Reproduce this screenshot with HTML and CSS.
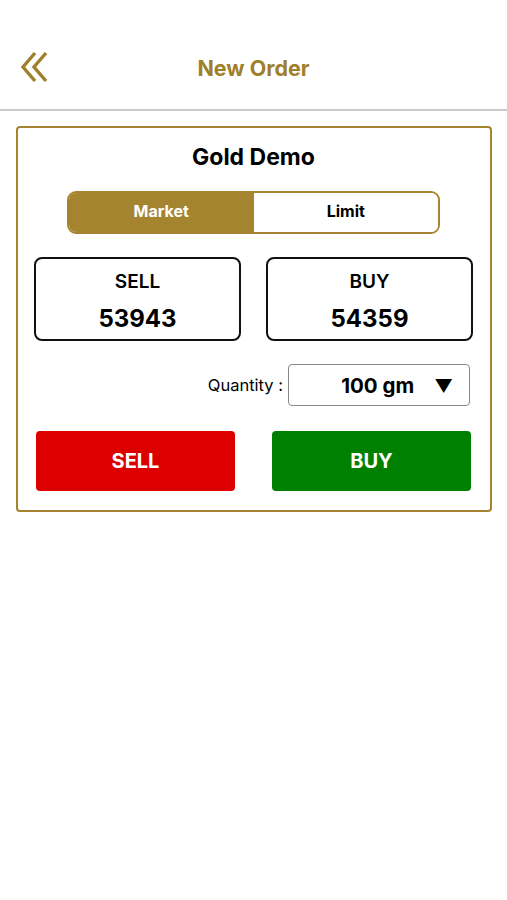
FILE: index.html
```html
<!DOCTYPE html>
<html lang="en">
<head>
  <meta charset="UTF-8">
  <meta name="viewport" content="width=device-width, initial-scale=1.0">
  <title>New Order</title>
  <link rel="stylesheet" href="styles.css">
</head>
<body>
  <header class="topbar">
    <a class="back" href="#">
      <svg width="28" height="32" viewBox="0 0 28 32">
        <polyline points="14,2 2,16 14,30" fill="none" stroke="#a07f2a" stroke-width="3.4"/>
        <polyline points="25,2 13,16 25,30" fill="none" stroke="#a07f2a" stroke-width="3.4"/>
      </svg>
    </a>
    <h1>New Order</h1>
  </header>

  <section class="card">
    <h2>Gold Demo</h2>

    <div class="tabs">
      <button class="tab active">Market</button>
      <button class="tab">Limit</button>
    </div>

    <div class="prices">
      <div class="price">
        <span class="label">SELL</span>
        <span class="value">53943</span>
      </div>
      <div class="price">
        <span class="label">BUY</span>
        <span class="value">54359</span>
      </div>
    </div>

    <div class="qty">
      <label>Quantity :</label>
      <div class="select">
        <span>100 gm</span>
        <span class="arrow">&#9660;</span>
      </div>
    </div>

    <div class="actions">
      <button class="btn sell">SELL</button>
      <button class="btn buy">BUY</button>
    </div>
  </section>
</body>
</html>
```

FILE: styles.css
```css
body {
  margin: 0;
  font-family: Inter, "Liberation Sans", sans-serif;
  background: #fff;
  color: #000;
}
.topbar {
  position: relative;
  height: 111px;
  box-sizing: border-box;
  padding-bottom: 29px;
  border-bottom: 2px solid #c9c9c9;
  display: flex;
  align-items: flex-end;
  justify-content: center;
}
.topbar h1 {
  margin: 0;
  font-size: 21.5px;
  line-height: 24px;
  font-weight: 700;
  color: #a07f2a;
}
.back {
  position: absolute;
  left: 21px;
  top: 51px;
  display: block;
  line-height: 0;
}
.card {
  margin: 15px 15px 0 16px;
  border: 2px solid #a5842f;
  border-radius: 4px;
  padding: 15px 17px 19px 16px;
}
.card h2 {
  margin: 0;
  text-align: center;
  font-size: 23px;
  font-weight: 700;
  line-height: 29px;
}
.tabs {
  margin: 19px auto 0;
  width: 369px;
  height: 39px;
  border: 2px solid #a5842f;
  border-radius: 9px;
  overflow: hidden;
  display: flex;
}
.tab {
  flex: 1;
  border: none;
  background: #fff;
  font-family: inherit;
  font-size: 16px;
  font-weight: 700;
  color: #000;
  padding: 0 0 3px;
}
.tab.active {
  background: #a5842f;
  color: #fff;
}
.prices {
  margin-top: 23px;
  display: flex;
  gap: 25px;
}
.price {
  flex: 1;
  height: 80px;
  box-sizing: border-box;
  height: 84px;
  padding-top: 4px;
  border: 2px solid #111;
  border-radius: 8px;
  display: flex;
  flex-direction: column;
  align-items: center;
  justify-content: center;
  gap: 14px;
}
.price .label {
  font-size: 19px;
  font-weight: 600;
  line-height: 22px;
}
.price .value {
  font-size: 24px;
  font-weight: 700;
  line-height: 24px;
}
.qty {
  margin-top: 23px;
  display: flex;
  justify-content: flex-end;
  align-items: center;
  gap: 5px;
  padding-right: 3px;
}
.qty label {
  font-size: 16.5px;
}
.select {
  height: 40px;
  border: 1px solid #888;
  border-radius: 4px;
  display: flex;
  align-items: center;
  justify-content: flex-end;
  gap: 20px;
  padding-right: 16px;
  width: 164px;
  font-size: 20.5px;
  font-weight: 700;
}
.select .arrow {
  font-size: 18px;
}
.actions {
  margin-top: 25px;
  display: flex;
  gap: 37px;
  padding: 0 2px;
}
.btn {
  flex: 1;
  height: 60px;
  border: none;
  border-radius: 4px;
  color: #fff;
  font-family: inherit;
  font-size: 20px;
  font-weight: 700;
}
.sell {
  background: #dd0000;
}
.buy {
  background: #008000;
}
```
